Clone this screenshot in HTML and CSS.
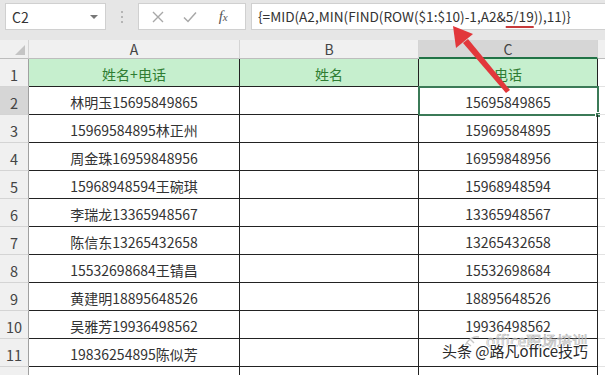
FILE: index.html
```
<!doctype html>
<html lang="zh-CN">
<head>
    <meta charset="UTF-8">
    <title>MID MIN FIND</title>
    <link rel="stylesheet" href="styles.css">
</head>
<body>
    <div class="app">
        <div class="toolbar">
            <div class="namebox">
                <span>C2</span>
                <span class="caret"></span>
            </div>
            <div class="dots"><i></i><i></i><i></i></div>
            <div class="fxbox">
                <span class="btn">
                    <svg width="12" height="12" viewBox="0 0 12 12"><path d="M1 1L11 11M11 1L1 11" stroke="#a8a8a8" stroke-width="1.4" fill="none"/></svg>
                </span>
                <span class="btn">
                    <svg width="14" height="12" viewBox="0 0 14 12"><path d="M1 6.5L5 10.5L13 1.5" stroke="#a8a8a8" stroke-width="1.5" fill="none"/></svg>
                </span>
                <span class="btn fx">f<sub>x</sub></span>
            </div>
            <div class="formula">{=MID(A2,MIN(FIND(ROW($1:$10)-1,A2&amp;<u>5/19</u>)),11)}</div>
        </div>

        <div class="sheet">
            <div class="corner"><span class="tri"></span></div>
            <div class="colhead">A</div>
            <div class="colhead">B</div>
            <div class="colhead sel">C</div>
            <div class="colhead last"></div>

            <div class="rowhead">1</div>
            <div class="cell good">姓名+电话</div>
            <div class="cell good">姓名</div>
            <div class="cell good">电话</div>
            <div class="cell blank"></div>

            <div class="rowhead sel">2</div>
            <div class="cell">林明玉15695849865</div>
            <div class="cell"></div>
            <div class="cell active">15695849865<span class="handle"></span></div>
            <div class="cell blank"></div>

            <div class="rowhead">3</div>
            <div class="cell">15969584895林正州</div>
            <div class="cell"></div>
            <div class="cell">15969584895</div>
            <div class="cell blank"></div>

            <div class="rowhead">4</div>
            <div class="cell">周金珠16959848956</div>
            <div class="cell"></div>
            <div class="cell">16959848956</div>
            <div class="cell blank"></div>

            <div class="rowhead">5</div>
            <div class="cell">15968948594王碗琪</div>
            <div class="cell"></div>
            <div class="cell">15968948594</div>
            <div class="cell blank"></div>

            <div class="rowhead">6</div>
            <div class="cell">李瑞龙13365948567</div>
            <div class="cell"></div>
            <div class="cell">13365948567</div>
            <div class="cell blank"></div>

            <div class="rowhead">7</div>
            <div class="cell">陈信东13265432658</div>
            <div class="cell"></div>
            <div class="cell">13265432658</div>
            <div class="cell blank"></div>

            <div class="rowhead">8</div>
            <div class="cell">15532698684王锖昌</div>
            <div class="cell"></div>
            <div class="cell">15532698684</div>
            <div class="cell blank"></div>

            <div class="rowhead">9</div>
            <div class="cell">黄建明18895648526</div>
            <div class="cell"></div>
            <div class="cell">18895648526</div>
            <div class="cell blank"></div>

            <div class="rowhead">10</div>
            <div class="cell">吴雅芳19936498562</div>
            <div class="cell"></div>
            <div class="cell">19936498562</div>
            <div class="cell blank"></div>

            <div class="rowhead">11</div>
            <div class="cell">19836254895陈似芳</div>
            <div class="cell"></div>
            <div class="cell"></div>
            <div class="cell blank"></div>

            <div class="rowhead"></div>
            <div class="cell"></div>
            <div class="cell"></div>
            <div class="cell"></div>
            <div class="cell blank"></div>
        </div>

        <!-- red arrow pointing at $10 -->
        <svg class="arrow" width="605" height="375" viewBox="0 0 605 375">
            <path d="M506 93L510 90L468 39L463 43Z" fill="#e2373b"/>
            <path d="M453 26L456 48L473 34Z" fill="#e2373b"/>
        </svg>

        <div class="mark">
            <svg class="logo" width="20" height="18" viewBox="0 0 20 18"><path d="M3 14C5 6 12 3 17 4M5 10L9 13M8 6L12 10" stroke="#c8c8c8" stroke-width="1.4" fill="none"/></svg>
            <span class="mark-top">office职场培训</span>
            <span class="mark-main">头条 @路凡office技巧</span>
        </div>
    </div>
</body>
</html>
```

FILE: styles.css
```
* {
    margin: 0;
    padding: 0;
    box-sizing: border-box;
}

body {
    width: 605px;
    height: 375px;
    overflow: hidden;
    background: #fff;
    font-family: "Noto Sans CJK SC", "Noto Sans", sans-serif;
    color: #333;
}

.app {
    position: relative;
    width: 605px;
    height: 375px;
    overflow: hidden;
}

.toolbar {
    display: flex;
    align-items: center;
    height: 40px;
    padding: 0 0 7px 5px;
    background: #e6e6e6;
}

.namebox,
.fxbox,
.formula {
    height: 27px;
    background: #fff;
    border: 1px solid #d0d0d0;
}

.namebox {
    width: 101px;
    display: flex;
    align-items: center;
    justify-content: space-between;
    padding: 0 7px 0 6px;
    font-size: 14px;
}

.caret {
    width: 0;
    height: 0;
    border-left: 4px solid transparent;
    border-right: 4px solid transparent;
    border-top: 4px solid #777;
}

.dots {
    width: 32px;
    display: flex;
    flex-direction: column;
    align-items: center;
    gap: 3px;
}

.dots i {
    width: 2px;
    height: 2px;
    background: #b5b5b5;
}

.fxbox {
    width: 108px;
    display: flex;
    align-items: center;
    padding-left: 13px;
}

.btn {
    width: 34px;
    display: flex;
    align-items: center;
}

.fx {
    font-family: "Liberation Serif", serif;
    font-style: italic;
    font-size: 15px;
    color: #555;
    padding-left: 5px;
}

.fx sub {
    font-size: 11px;
    vertical-align: -1px;
}

.formula {
    flex: 1;
    margin-left: 5px;
    border-right: 0;
    padding-left: 6px;
    font-size: 13.6px;
    line-height: 25px;
    white-space: nowrap;
}

.formula u {
    text-decoration: underline;
    text-decoration-color: #c63a3a;
    text-decoration-thickness: 2px;
    text-underline-offset: 4px;
}

.sheet {
    display: grid;
    grid-template-columns: 29px 211px 179px 179px 1fr;
    grid-template-rows: 19px repeat(12, 28px);
}

.corner,
.colhead {
    background: #f0f0f0;
    border-right: 1px solid #d4d4d4;
    border-bottom: 1px solid #bdbdbd;
}

.corner {
    position: relative;
}

.tri {
    position: absolute;
    right: 3px;
    bottom: 3px;
    width: 0;
    height: 0;
    border-left: 10px solid transparent;
    border-bottom: 10px solid #c4c4c4;
}

.colhead {
    display: flex;
    align-items: center;
    justify-content: center;
    font-size: 14px;
    color: #444;
}

.colhead.sel {
    background: #d6d6d6;
    border-bottom: 2px solid #217346;
}

.colhead.last {
    border-right: 0;
}

.rowhead {
    background: #f0f0f0;
    border-right: 1px solid #a0a0a0;
    border-bottom: 1px solid #d4d4d4;
    display: flex;
    align-items: flex-end;
    justify-content: center;
    padding-bottom: 1px;
    font-size: 14.5px;
    color: #444;
}

.rowhead.sel {
    background: #d6d6d6;
}

.cell {
    position: relative;
    display: flex;
    align-items: center;
    justify-content: center;
    padding-top: 2px;
    border-right: 1px solid #222;
    border-bottom: 1px solid #222;
    font-size: 14px;
    color: #333;
    white-space: nowrap;
}

.cell.good {
    background: #c6efce;
    color: #2f7d32;
}

.cell.blank {
    border-right: 0;
    border-bottom: 1px solid #e2e2e2;
}

.cell.active {
    outline: 2px solid #3b7a57;
    outline-offset: -1px;
}

.handle {
    position: absolute;
    right: -4px;
    bottom: -4px;
    width: 6px;
    height: 6px;
    background: #3b7a57;
    border: 1px solid #fff;
}

.arrow {
    position: absolute;
    left: 0;
    top: 0;
}

.mark {
    position: absolute;
    left: 442px;
    top: 331px;
    width: 160px;
    height: 34px;
}

.logo {
    position: absolute;
    left: 20px;
    top: 2px;
}

.mark-top {
    position: absolute;
    left: 44px;
    top: 1px;
    font-size: 15px;
    line-height: 18px;
    color: rgba(255, 255, 255, 0.4);
    -webkit-text-stroke: 0.6px #b0b0b0;
    letter-spacing: 0.3px;
}

.mark-main {
    position: absolute;
    left: 0;
    top: 10px;
    font-size: 15px;
    line-height: 20px;
    color: #2a2a2a;
    text-shadow: 1px 0 0 #fff, -1px 0 0 #fff, 0 1px 0 #fff, 0 -1px 0 #fff;
    white-space: nowrap;
}
```
